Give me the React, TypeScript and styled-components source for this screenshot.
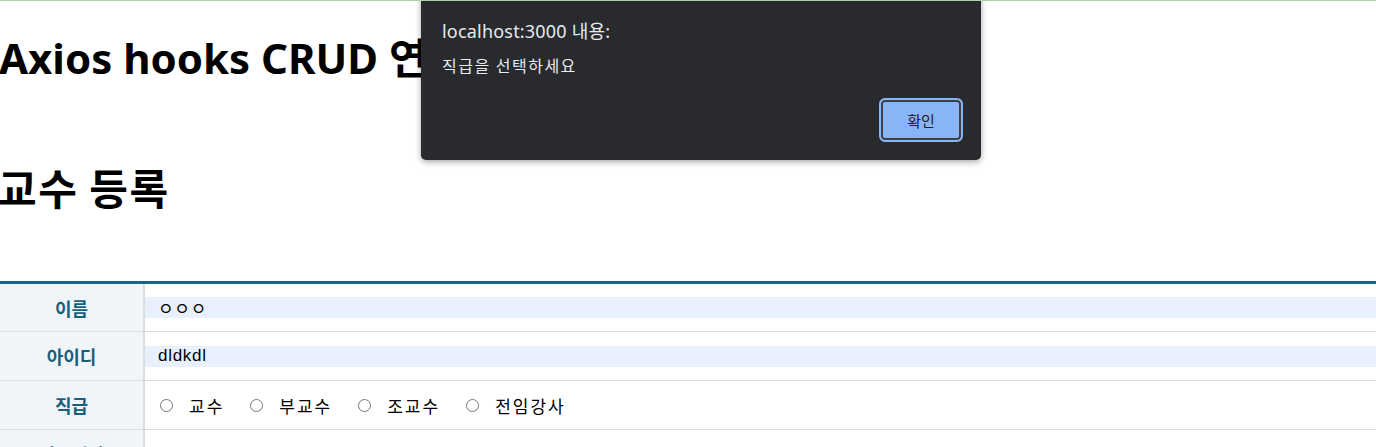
import styled, { createGlobalStyle } from "styled-components";

const GlobalStyle = createGlobalStyle`
  html, body {
    margin: 0;
    padding: 0;
    background: #fff;
    overflow: hidden;
  }
  body {
    font-family: "Noto Sans", "Noto Sans CJK KR", sans-serif;
    border-top: 1px solid #a9d3a6;
  }
`;

const Page = styled.div`
  position: relative;
  width: 1376px;
  height: 446px;
  overflow: hidden;
`;

const Title = styled.h1`
  margin: 29px 0 0 -1px;
  font-size: 42px;
  line-height: 56px;
  font-weight: 700;
  color: #000;
  font-family: "Noto Sans", "Noto Sans CJK KR", sans-serif;
  white-space: nowrap;
`;

const SubTitle = styled.h2`
  margin: 73px 0 0 -2px;
  font-size: 42px;
  line-height: 56px;
  font-weight: 700;
  color: #000;
  font-family: "Noto Sans CJK KR", sans-serif;
  letter-spacing: 1.5px;
`;

const FormTable = styled.table`
  margin-top: 66px;
  width: 100%;
  border-collapse: collapse;
  border-top: 3px solid #146788;
`;

const Row = styled.tr`
  height: 49px;
  border-bottom: 1px solid #dcdcdc;
`;

const Label = styled.th`
  width: 143px;
  padding: 0;
  background: #f0f5fa;
  border-right: 2px solid #dcdcdc;
  color: #1a5f7a;
  font-family: "Noto Sans CJK KR", sans-serif;
  font-size: 18px;
  font-weight: 700;
  text-align: center;
`;

const Cell = styled.td`
  padding: 0;
`;

const Field = styled.div<{ $filled?: boolean; $muted?: boolean }>`
  height: 21px;
  display: flex;
  align-items: center;
  padding-left: 13px;
  background: ${(p) => (p.$filled ? "#e8f0fe" : "transparent")};
  color: ${(p) => (p.$muted ? "#8a8a8a" : "#000")};
  font-family: "Liberation Sans", "Noto Sans CJK KR", sans-serif;
  font-size: 17px;
  letter-spacing: 0.7px;
`;

const RadioGroup = styled.div`
  display: flex;
  align-items: center;
  padding-left: 15px;
  gap: 26px;
`;

const RadioOption = styled.label`
  display: flex;
  align-items: center;
  gap: 16px;
  font-family: "Noto Sans CJK KR", sans-serif;
  font-size: 17px;
  letter-spacing: 2px;
  color: #000;
`;

const RadioDot = styled.span`
  width: 13px;
  height: 13px;
  box-sizing: border-box;
  border: 1px solid #767676;
  border-radius: 50%;
  background: #fff;
`;

const Dialog = styled.div`
  position: absolute;
  left: 421px;
  top: -10px;
  width: 560px;
  height: 169px;
  background: #292a2d;
  border-radius: 0 0 5px 5px;
  box-shadow: 0 2px 6px rgba(0, 0, 0, 0.35);
  box-sizing: border-box;
  padding: 27px 20px 0 21px;
  font-family: "Noto Sans", "Noto Sans CJK KR", sans-serif;
  color: #e8eaed;
`;

const DialogTitle = styled.div`
  font-size: 18px;
  line-height: 26px;
  color: #e8eaed;
  letter-spacing: 0.2px;
`;

const DialogMessage = styled.div`
  margin-top: 11px;
  font-family: "Noto Sans CJK KR", sans-serif;
  font-size: 16px;
  line-height: 20px;
  color: #e8eaed;
  letter-spacing: 1.5px;
`;

const DialogActions = styled.div`
  display: flex;
  justify-content: flex-end;
  margin-top: 25px;
`;

const OkButton = styled.button`
  width: 80px;
  height: 40px;
  background: #8ab4f8;
  border: 2px solid #3c4043;
  outline: 2px solid #8ab4f8;
  outline-offset: 0;
  border-radius: 4px;
  color: #202124;
  font-family: "Noto Sans CJK KR", sans-serif;
  font-size: 15px;
  box-shadow: 0 0 0 1px #8ab4f8;
`;

const ranks = ["교수", "부교수", "조교수", "전임강사"];

export default function App() {
  return (
    <Page>
      <GlobalStyle />
      <Title>Axios hooks CRUD 연습</Title>
      <SubTitle>교수 등록</SubTitle>
      <FormTable>
        <tbody>
          <Row>
            <Label>이름</Label>
            <Cell>
              <Field $filled>ㅇㅇㅇ</Field>
            </Cell>
          </Row>
          <Row>
            <Label>아이디</Label>
            <Cell>
              <Field $filled>dldkdl</Field>
            </Cell>
          </Row>
          <Row>
            <Label>직급</Label>
            <Cell>
              <RadioGroup>
                {ranks.map((r) => (
                  <RadioOption key={r}>
                    <RadioDot />
                    {r}
                  </RadioOption>
                ))}
              </RadioGroup>
            </Cell>
          </Row>
          <Row>
            <Label>임용일자</Label>
            <Cell>
              <Field $muted>연도-월-일</Field>
            </Cell>
          </Row>
        </tbody>
      </FormTable>
      <Dialog>
        <DialogTitle>localhost:3000 내용:</DialogTitle>
        <DialogMessage>직급을 선택하세요</DialogMessage>
        <DialogActions>
          <OkButton>확인</OkButton>
        </DialogActions>
      </Dialog>
    </Page>
  );
}
